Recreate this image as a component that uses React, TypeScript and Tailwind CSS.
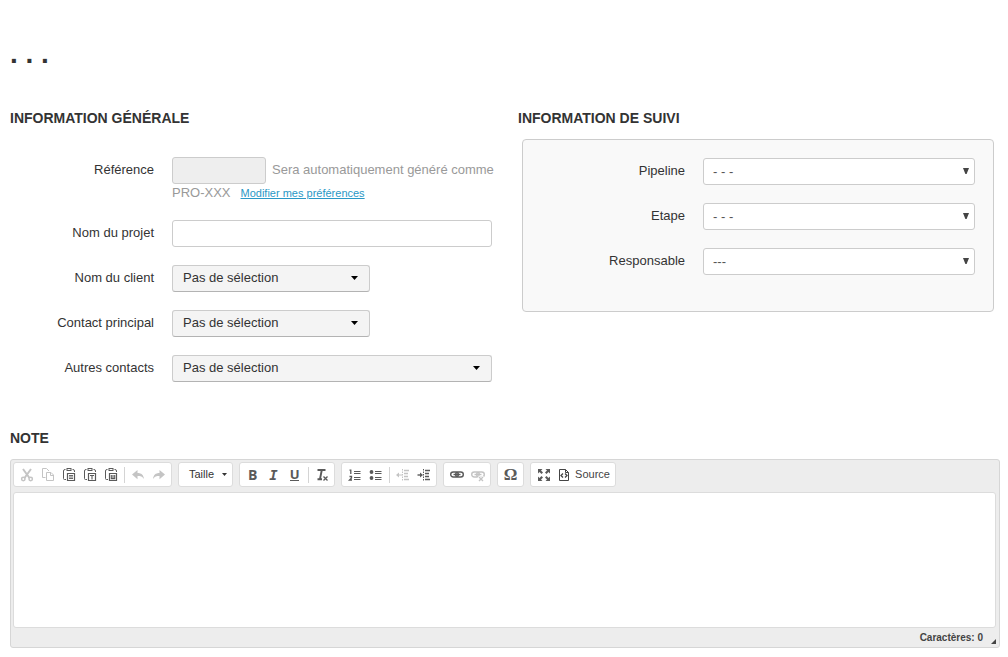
import React from 'react';

const NoSelection = ({ id, className }: { id: string; className: string }) => (
  <button
    id={id}
    type="button"
    className={`flex h-[27px] items-center justify-between rounded-[3px] border border-[#ccc] border-b-[#b3b3b3] bg-[#f4f4f4] pr-[11px] pb-0.5 pl-[10px] text-[13px] text-[#333] ${className}`}
  >
    Pas de sélection
    <svg width="7" height="4" viewBox="0 0 7 4" aria-hidden="true">
      <path d="M0 0h7L3.5 4z" fill="#000" />
    </svg>
  </button>
);

const Field = ({ id, label, children }: { id: string; label: string; children: React.ReactNode }) => (
  <div className="flex items-start gap-[18px]">
    <label htmlFor={id} className="w-36 shrink-0 pt-1 text-right leading-[18px]">
      {label}
    </label>
    <div className="min-w-0 flex-1">{children}</div>
  </div>
);

const SelectField = ({ id, label, value }: { id: string; label: string; value: string }) => (
  <Field id={id} label={label}>
    <div className="relative">
      <select
        id={id}
        className="block h-[27px] w-full appearance-none rounded-[3px] border border-[#ccc] bg-white px-[9px] text-[13px] text-[#555]"
      >
        <option>{value}</option>
      </select>
      <svg width="6" height="6" viewBox="0 0 6 6" className="pointer-events-none absolute top-[10px] right-[6px]" aria-hidden="true">
        <path d="M0 0h6L3.6 6H2.4z" fill="#444" />
      </svg>
    </div>
  </Field>
);

const SectionTitle = ({ children }: { children: React.ReactNode }) => (
  <h2 className="text-[14px] leading-5 font-bold uppercase">{children}</h2>
);

const Group = ({ children }: { children: React.ReactNode }) => (
  <div className="flex h-[25px] items-center rounded-[3px] border border-[#dcdcdc] bg-white px-0.5">{children}</div>
);

const Divider = () => <span className="mx-[2px] h-4 w-[2px] border-r border-[#d4d4d4]" />;

const Tool = ({ title, disabled, children }: { title: string; disabled?: boolean; children: React.ReactNode }) => (
  <button
    type="button"
    aria-label={title}
    disabled={disabled}
    className="flex h-[23px] w-[21px] items-center justify-center text-[#5a5a5a] disabled:text-[#c4c4c4]"
  >
    {children}
  </button>
);

const Icon = ({ children }: { children: React.ReactNode }) => (
  <svg width="16" height="16" viewBox="0 0 16 16" fill="none" stroke="currentColor" aria-hidden="true">
    {children}
  </svg>
);

const Clipboard = ({ children }: { children: React.ReactNode }) => (
  <Icon>
    <path d="M4.500 2.500H4q-1.500 0-1.500 1.500v7.500q0 1 1 1H5M11.500 2.500h.5q1.500 0 1.500 1.500v1" />
    <path d="M5.500 1h5v3h-5z" fill="currentColor" stroke="none" />
    <path d="M6.500 2h3v1h-3z" fill="#fff" stroke="none" />
    <path d="M6.500 6.500h7v7h-7z" strokeWidth="1.200" />
    {children}
  </Icon>
);

const IndentLines = () => (
  <>
    <path d="M9 3.500h5M9 6.500h4M9 9.500h4M9 12.500h5" strokeWidth="1.300" />
    <path d="M7.500 2v12" strokeDasharray="1.500 1" />
  </>
);

const Link = () => (
  <>
    <rect x="1.700" y="5" width="7.600" height="5" rx="2.500" strokeWidth="1.400" />
    <rect x="6.700" y="5" width="7.600" height="5" rx="2.500" strokeWidth="1.400" />
    <path d="M4.500 7.500h7" strokeWidth="1.400" />
  </>
);

const Toolbar = () => (
  <div className="flex flex-wrap gap-1.5 px-0.5 pt-0.5 pb-[5px]">
    <Group>
      <Tool title="Couper" disabled>
        <Icon>
          <path d="M4 2l6.500 9M12 2L5.500 11" strokeWidth="2" />
          <circle cx="4.300" cy="12" r="1.700" strokeWidth="1.500" />
          <circle cx="11.700" cy="12" r="1.700" strokeWidth="1.500" />
        </Icon>
      </Tool>
      <Tool title="Copier" disabled>
        <Icon>
          <path d="M5.500 10.500h-3v-9h4l2.500 2.500M6.500 5.500h4.500l2.500 2.500v5.500h-7zM10.500 5.500v3h3" />
        </Icon>
      </Tool>
      <Tool title="Coller">
        <Clipboard>
          <path d="M8 8.500h4M8 10h4M8 11.500h4" strokeWidth=".9" />
        </Clipboard>
      </Tool>
      <Tool title="Coller comme texte sans mise en forme">
        <Clipboard>
          <path d="M8 8.500h4M10 8.500v4" strokeWidth="1.100" />
        </Clipboard>
      </Tool>
      <Tool title="Coller depuis Word">
        <Clipboard>
          <path d="M8.300 8v3.600h3.400V8M10 8v3.500" strokeWidth="1.100" />
        </Clipboard>
      </Tool>
      <Divider />
      <Tool title="Annuler" disabled>
        <Icon>
          <path d="M7.500 3v3c4 0 6 2 6.500 6-1.500-2.500-3.500-3-6.500-3v3.200L2 7.500z" fill="currentColor" stroke="none" />
        </Icon>
      </Tool>
      <Tool title="Rétablir" disabled>
        <Icon>
          <path d="M8.500 3v3c-4 0-6 2-6.500 6 1.500-2.500 3.500-3 6.500-3v3.200L14 7.500z" fill="currentColor" stroke="none" />
        </Icon>
      </Tool>
    </Group>
    <Group>
      <button type="button" className="flex h-[23px] items-center gap-2 pr-[3px] pl-2 text-[11px] text-[#333]">
        Taille
        <svg width="5" height="3" viewBox="0 0 5 3" aria-hidden="true">
          <path d="M0 0h5L2.500 3z" fill="#333" />
        </svg>
      </button>
    </Group>
    <Group>
      <Tool title="Gras">
        <span className="font-['Open_Sans',sans-serif] text-[14px] font-bold">B</span>
      </Tool>
      <Tool title="Italique">
        <span className="font-['DejaVu_Sans_Mono',monospace] text-[14px] leading-4 font-bold italic">I</span>
      </Tool>
      <Tool title="Souligné">
        <span className="border-b border-[#5a5a5a] font-['Open_Sans',sans-serif] text-[13px] leading-3 font-bold">U</span>
      </Tool>
      <Divider />
      <Tool title="Supprimer la mise en forme">
        <Icon>
          <path d="M3.500 3h8M7.800 3L6 12M3.500 12.300H8" strokeWidth="1.900" />
          <path d="M9.500 9.500l4 4M13.500 9.500l-4 4" strokeWidth="1.300" />
        </Icon>
      </Tool>
    </Group>
    <Group>
      <Tool title="Liste numérotée">
        <Icon>
          <path d="M2.500 3.200h1.300V7M2.500 9.500h2v1.500l-2 2h2.500" strokeWidth="1.300" />
          <path d="M7 4.500h6.500M7 6.500h6.500M7 10.500h6.500M7 12.500h6.500" strokeWidth="1.200" />
        </Icon>
      </Tool>
      <Tool title="Liste à puces">
        <Icon>
          <circle cx="3.500" cy="5" r="1.900" fill="currentColor" stroke="none" />
          <circle cx="3.500" cy="11" r="1.900" fill="currentColor" stroke="none" />
          <path d="M7 4.500h6.500M7 6.500h6.500M7 10.500h6.500M7 12.500h6.500" strokeWidth="1.200" />
        </Icon>
      </Tool>
      <Divider />
      <Tool title="Diminuer le retrait" disabled>
        <Icon>
          <IndentLines />
          <path d="M3 8h4" />
          <path d="M4 5.500v5L1 8z" fill="currentColor" stroke="none" />
        </Icon>
      </Tool>
      <Tool title="Augmenter le retrait">
        <Icon>
          <IndentLines />
          <path d="M1.500 8H5" strokeWidth="1.400" />
          <path d="M4 5.500v5L7 8z" fill="currentColor" stroke="none" />
        </Icon>
      </Tool>
    </Group>
    <Group>
      <Tool title="Lien">
        <Icon>
          <Link />
        </Icon>
      </Tool>
      <Tool title="Supprimer le lien" disabled>
        <Icon>
          <Link />
          <path d="M8.500 9.500l5 5M13.500 9.500l-5 5" stroke="#fff" strokeWidth="3" />
          <path d="M9 10l4 4M13 10l-4 4" strokeWidth="1.400" />
        </Icon>
      </Tool>
    </Group>
    <Group>
      <Tool title="Insérer un caractère spécial">
        <span className="font-['Liberation_Serif',serif] text-[17px] font-bold">Ω</span>
      </Tool>
    </Group>
    <Group>
      <Tool title="Agrandir">
        <Icon>
          <path
            d="M2 2h4.500L5 3.500l2 2L5.500 7l-2-2L2 6.500zM14 2v4.500L12.500 5l-2 2L9 5.500l2-2L9.500 2zM2 14V9.500L3.500 11l2-2L7 10.500l-2 2L6.500 14zM14 14H9.500l1.500-1.500-2-2L10.500 9l2 2L14 9.500z"
            fill="currentColor"
            stroke="none"
          />
        </Icon>
      </Tool>
      <button type="button" className="flex h-[23px] items-center gap-[3px] pr-[3px] pl-0.5 text-[11px] text-[#444]">
        <Icon>
          <path d="M3.500 2.500h6l3 3v8h-9zM9.500 2.500v3h3" />
          <path d="M7 6.500L5 8.500l2 2M9 6.500l2 2-2 2" strokeWidth="1.300" />
        </Icon>
        Source
      </button>
    </Group>
  </div>
);

export default function App() {
  return (
    <form className="bg-white pt-[34px] pr-2 pb-2 pl-[10px] font-['Liberation_Sans',Arial,sans-serif] text-[13px] text-[#333]">
      <h1 className="text-[28px] leading-10 font-bold">. . .</h1>

      <div className="mt-[34px] grid grid-cols-2 gap-[26px]">
        <section>
          <SectionTitle>Information générale</SectionTitle>
          <div className="mt-[29px] flex flex-col gap-[18px]">
            <Field id="reference" label="Référence">
              <div className="leading-[18px] whitespace-nowrap text-[#999]">
                <input
                  id="reference"
                  type="text"
                  disabled
                  className="mr-1.5 h-[27px] w-[94px] rounded-[3px] border border-[#ccc] bg-[#eee] align-middle"
                />
                Sera automatiquement généré comme
                <br />
                PRO-XXX
                <a href="#preferences" className="ml-[10px] text-[11px] text-[#2a98c6] underline">
                  Modifier mes préférences
                </a>
              </div>
            </Field>
            <Field id="project" label="Nom du projet">
              <input
                id="project"
                type="text"
                className="block h-[27px] w-full rounded-[3px] border border-[#ccc] px-2"
              />
            </Field>
            <Field id="client" label="Nom du client">
              <NoSelection id="client" className="w-[198px]" />
            </Field>
            <Field id="contact" label="Contact principal">
              <NoSelection id="contact" className="w-[198px]" />
            </Field>
            <Field id="others" label="Autres contacts">
              <NoSelection id="others" className="w-full" />
            </Field>
          </div>
        </section>

        <section>
          <SectionTitle>Information de suivi</SectionTitle>
          <div className="mt-[11px] mr-1.5 ml-1 flex flex-col gap-[18px] rounded-[4px] border border-[#ccc] bg-[#f9f9f9] px-[18px] pt-[18px] pb-9">
            <SelectField id="pipeline" label="Pipeline" value="- - -" />
            <SelectField id="stage" label="Etape" value="- - -" />
            <SelectField id="owner" label="Responsable" value="---" />
          </div>
        </section>
      </div>

      <section className="mt-[46px]">
        <SectionTitle>
          <label htmlFor="note">Note</label>
        </SectionTitle>
        <div className="mt-[11px] rounded-[3px] border border-[#d6d6d6] bg-[#ededed]">
          <Toolbar />
          <div className="pr-[3px] pl-0.5">
            <textarea
              id="note"
              className="block h-34 w-full resize-none rounded-[3px] border border-[#dcdcdc] bg-white p-2"
            />
          </div>
          <div className="flex h-[19px] items-center justify-end gap-2 pr-[3px] text-[10px] font-bold text-[#444]">
            Caractères: 0
            <svg width="5" height="5" viewBox="0 0 5 5" className="mt-2" aria-hidden="true">
              <path d="M5 0v5H0z" fill="#444" />
            </svg>
          </div>
        </div>
      </section>
    </form>
  );
}
